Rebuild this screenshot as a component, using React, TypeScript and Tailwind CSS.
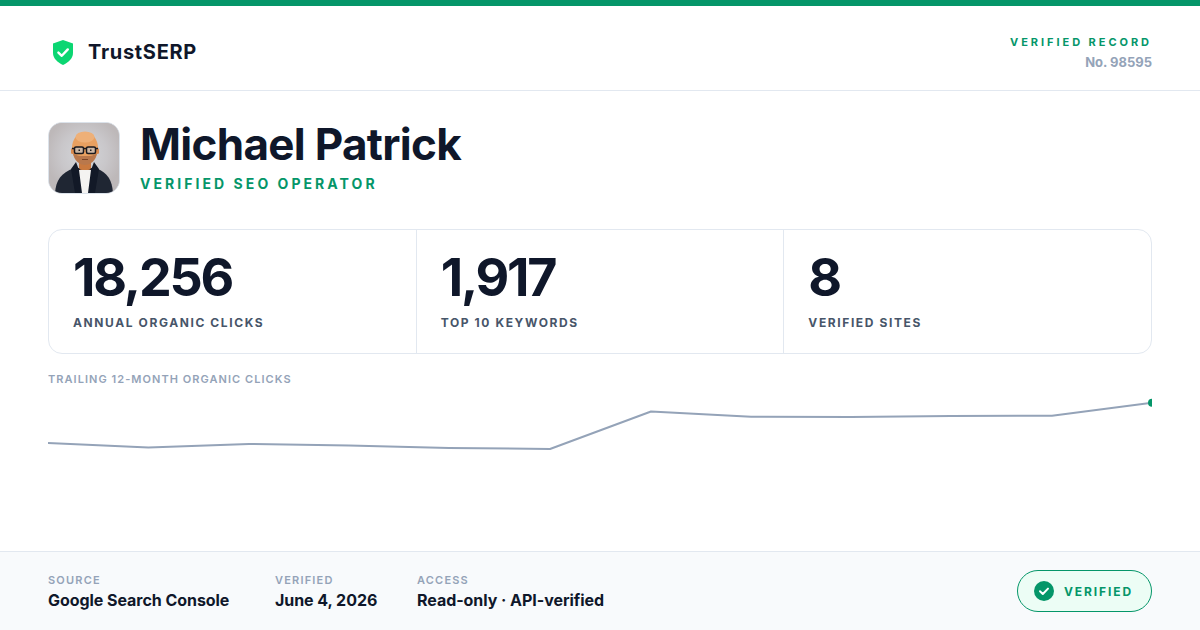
import React from "react";

function Shield() {
  return (
    <svg width="20" height="25" viewBox="0 0 20 25" className="block">
      <path d="M10 0 L20 3.6 V13 C20 18.5 15.5 22.3 10 25 C4.5 22.3 0 18.5 0 13 V3.6 Z" fill="#0bd672" />
      <path d="M5.4 12.6 L8.8 15.8 L14.8 9.4" fill="none" stroke="#ffffff" strokeWidth="2.4" strokeLinecap="round" strokeLinejoin="round" />
    </svg>
  );
}

function Avatar() {
  return (
    <div className="w-[72px] h-[72px] rounded-[14px] border border-[#dbe2ea] overflow-hidden bg-[#c3bfc0] shrink-0">
      <svg width="70" height="70" viewBox="0 0 70 70" className="block">
        <defs>
          <radialGradient id="bg" cx="50%" cy="45%" r="55%">
            <stop offset="0%" stopColor="#d4d6da" />
            <stop offset="60%" stopColor="#c9c7ca" />
            <stop offset="100%" stopColor="#bdb8b9" />
          </radialGradient>
        </defs>
        <rect width="70" height="70" fill="url(#bg)" />
        <path d="M6 70 C7 57 12 50 25 45 L47 45 C59 50 63 57 64 70 Z" fill="#1f2633" />
        <path d="M29 47 L43 47 L41 70 L31 70 Z" fill="#f4f3f1" />
        <path d="M27 39 L30 47 L33 70 L26 70 L22 46 Z M45 39 L42 47 L39 70 L46 70 L50 46 Z" fill="#121927" />
        <rect x="30" y="36" width="12" height="11" rx="3" fill="#c9793f" />
        <ellipse cx="36" cy="25" rx="13" ry="16" fill="#e8a060" />
        <ellipse cx="36" cy="14" rx="9.5" ry="5.5" fill="#eeb078" />
        <path d="M24 30 C25 38 31 42 36 42 C41 42 47 38 48 30 C44 33.5 40 33 36 33 C32 33 28 33.5 24 30 Z" fill="#b9784c" />
        <rect x="22" y="25" width="3" height="6" rx="1.5" fill="#d98a4e" />
        <rect x="47" y="25" width="3" height="6" rx="1.5" fill="#d98a4e" />
        <rect x="25.5" y="24" width="9" height="6.5" rx="1.5" fill="#cdb7a4" stroke="#1a1a1f" strokeWidth="1.5" />
        <rect x="37.5" y="24" width="9" height="6.5" rx="1.5" fill="#cdb7a4" stroke="#1a1a1f" strokeWidth="1.5" />
        <path d="M34.5 25.5 H37.5 M23 25.5 H25.5 M46.5 25.5 H49" stroke="#1a1a1f" strokeWidth="1.3" />
        <path d="M29.5 27.2 H31 M41 27.2 H42.5" stroke="#222" strokeWidth="1.4" />
        <path d="M33 36.5 H39" stroke="#7c4526" strokeWidth="1" />
      </svg>
    </div>
  );
}

function Stat({ value, label, border }: { value: string; label: string; border?: boolean }) {
  return (
    <div className={`flex-1 pl-6 pt-[18px] ${border ? "border-l border-[#e2e8f0]" : ""}`}>
      <div className="text-[52px] leading-[60px] font-bold tracking-[-2.2px] text-[#0f172a]">{value}</div>
      <div className="mt-[7px] text-[12px] leading-[16px] font-bold tracking-[1.6px] text-[#475569]">{label}</div>
    </div>
  );
}

function Meta({ label, value, width }: { label: string; value: string; width: string }) {
  return (
    <div className={width}>
      <div className="text-[11px] leading-[14px] font-semibold tracking-[1.2px] text-[#94a3b8]">{label}</div>
      <div className="mt-[3px] text-[16px] leading-[20px] font-bold tracking-[-0.05px] text-[#0f172a]">{value}</div>
    </div>
  );
}

export default function App() {
  return (
    <div className="w-[1200px] h-[630px] bg-white flex flex-col overflow-hidden font-['Inter',sans-serif]">
      <div className="h-[6px] bg-[#059669]" />
      <header className="h-[85px] border-b border-[#e2e8f0] pl-[53px] pr-12 pt-[8px] flex items-center justify-between">
        <div className="flex items-center gap-[15px]">
          <Shield />
          <span className="text-[20px] leading-[28px] font-bold tracking-[0.7px] text-[#0f172a]">TrustSERP</span>
        </div>
        <div className="text-right">
          <div className="text-[11px] leading-[16px] font-bold tracking-[2.95px] text-[#059669]">VERIFIED RECORD</div>
          <div className="mt-[3px] text-[13px] leading-[18px] font-bold text-[#94a3b8]">No. 98595</div>
        </div>
      </header>
      <main className="flex-1 px-12 pt-[31px]">
        <div className="flex items-center gap-[21px]">
          <Avatar />
          <div className="mt-[-1px]">
            <div className="text-[44px] leading-[48px] font-bold tracking-[-0.7px] text-[#0f172a] ml-[-1px] mt-[-1px]">Michael Patrick</div>
            <div className="mt-[6px] text-[14px] leading-[20px] font-bold tracking-[3.05px] text-[#059669] ml-[-1px]">VERIFIED SEO OPERATOR</div>
          </div>
        </div>
        <div className="mt-[35px] h-[125px] flex rounded-[14px] border border-[#e2e8f0]">
          <Stat value="18,256" label="ANNUAL ORGANIC CLICKS" />
          <Stat value="1,917" label="TOP 10 KEYWORDS" border />
          <Stat value="8" label="VERIFIED SITES" border />
        </div>
        <div className="mt-[18px] text-[11px] leading-[14px] font-semibold tracking-[1.05px] text-[#94a3b8]">TRAILING 12-MONTH ORGANIC CLICKS</div>
        <svg width="1104" height="80" viewBox="48 393 1104 80" className="block mt-[7px]">
          <polyline
            points="48,443 148.4,447.5 249,444 349,445.5 449,448 550,449 651,411.5 751,416.8 851,417 951,416 1052,415.8 1152,402.8"
            fill="none"
            stroke="#94a3b8"
            strokeWidth="2"
            strokeLinejoin="round"
          />
          <circle cx="1152" cy="402.8" r="4" fill="#059669" />
        </svg>
      </main>
      <footer className="h-[79px] border-t border-[#e2e8f0] bg-[#f8fafc] px-12 flex items-center justify-between">
        <div className="flex">
          <Meta label="SOURCE" value="Google Search Console" width="w-[227px]" />
          <Meta label="VERIFIED" value="June 4, 2026" width="w-[142px]" />
          <Meta label="ACCESS" value="Read-only · API-verified" width="w-[200px]" />
        </div>
        <div className="h-[42px] w-[135px] rounded-full border border-[#059669] bg-[#ecfdf5] flex items-center pl-[16px] gap-[10px]">
          <svg width="20" height="20" viewBox="0 0 20 20">
            <circle cx="10" cy="10" r="10" fill="#059669" />
            <path d="M6 10.3 L8.8 13 L14 7.6" fill="none" stroke="#fff" strokeWidth="2" strokeLinecap="round" strokeLinejoin="round" />
          </svg>
          <span className="text-[12px] leading-[16px] font-bold tracking-[1.9px] text-[#059669] mt-[1px]">VERIFIED</span>
        </div>
      </footer>
    </div>
  );
}
